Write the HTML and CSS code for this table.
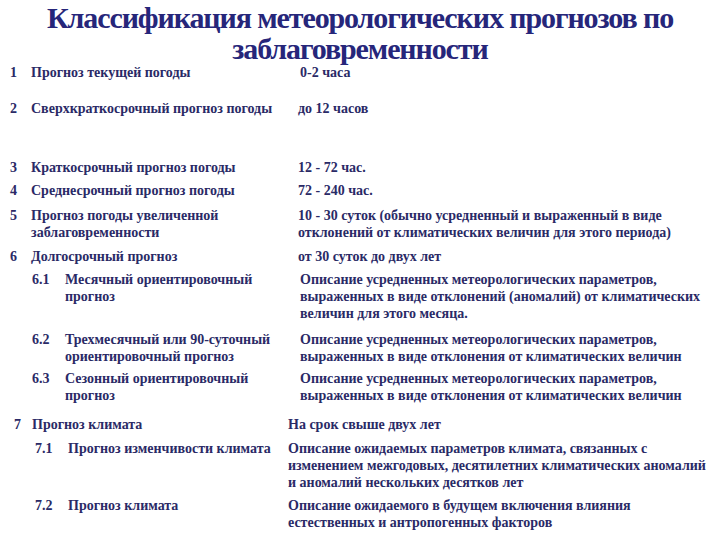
FILE: index.html
```html
<!DOCTYPE html>
<html lang="ru">
<head>
<meta charset="utf-8">
<title>Классификация метеорологических прогнозов</title>
<link rel="stylesheet" href="styles.css">
</head>
<body>
<h1 class="title">Классификация метеорологических прогнозов по<br>заблаговременности</h1>
<div class="table">
  <div class="row r1"><span class="num">1</span><span class="label">Прогноз текущей погоды</span><span class="val v1">0-2 часа</span></div>
  <div class="row r2"><span class="num">2</span><span class="label">Сверхкраткосрочный прогноз погоды</span><span class="val">до 12 часов</span></div>
  <div class="row r3"><span class="num">3</span><span class="label">Краткосрочный прогноз погоды</span><span class="val">12 - 72 час.</span></div>
  <div class="row r4"><span class="num">4</span><span class="label">Среднесрочный прогноз погоды</span><span class="val">72 - 240 час.</span></div>
  <div class="row r5"><span class="num">5</span><span class="label">Прогноз погоды увеличенной<br>заблаговременности</span><span class="val">10 - 30 суток (обычно усредненный и выраженный в виде<br>отклонений от климатических величин для этого периода)</span></div>
  <div class="row r6"><span class="num">6</span><span class="label">Долгосрочный прогноз</span><span class="val">от 30 суток до двух лет</span></div>
  <div class="row sub s61"><span class="num">6.1</span><span class="label">Месячный ориентировочный<br>прогноз</span><span class="val">Описание усредненных метеорологических параметров,<br>выраженных в виде отклонений (аномалий) от климатических<br>величин для этого месяца.</span></div>
  <div class="row sub s62"><span class="num">6.2</span><span class="label">Трехмесячный или 90-суточный<br>ориентировочный прогноз</span><span class="val">Описание усредненных метеорологических параметров,<br>выраженных в виде отклонения от климатических величин</span></div>
  <div class="row sub s63"><span class="num">6.3</span><span class="label">Сезонный ориентировочный<br>прогноз</span><span class="val">Описание усредненных метеорологических параметров,<br>выраженных в виде отклонения от климатических величин</span></div>
  <div class="row clim r7"><span class="num">7</span><span class="label">Прогноз климата</span><span class="val">На срок свыше двух лет</span></div>
  <div class="row clim-sub s71"><span class="num">7.1</span><span class="label">Прогноз изменчивости климата</span><span class="val">Описание ожидаемых параметров климата, связанных с<br>изменением межгодовых, десятилетних климатических аномалий<br>и аномалий нескольких десятков лет</span></div>
  <div class="row clim-sub s72"><span class="num">7.2</span><span class="label">Прогноз климата</span><span class="val">Описание ожидаемого в будущем включения влияния<br>естественных и антропогенных факторов</span></div>
</div>
</body>
</html>
```

FILE: styles.css
```css
html, body {
  margin: 0;
  padding: 0;
  background: #ffffff;
}
body {
  width: 720px;
  height: 540px;
  overflow: hidden;
  font-family: "Liberation Serif", "Times New Roman", serif;
  color: #2a2a66;
}
.title {
  margin: 0;
  padding-top: 2px;
  font-size: 30px;
  line-height: 31px;
  font-weight: bold;
  text-align: center;
  color: #26267a;
  letter-spacing: -1.1px;
}
.table {
  font-family: "Liberation Serif", "Times New Roman", serif;
  font-size: 14px;
  line-height: 17px;
  font-weight: bold;
}
.row {
  display: flex;
  align-items: flex-start;
}
.num { flex: none; }
.label { flex: none; }
.val { flex: 1; white-space: nowrap; }

.row .num { width: 21px; margin-left: 10px; }
.row .label { width: 267px; }

.sub .num { width: 33px; margin-left: 32px; }
.sub .label { width: 235px; }

.clim .num { width: 18px; margin-left: 14px; }
.clim .label { width: 256px; }

.clim-sub .num { width: 33px; margin-left: 35px; }
.clim-sub .label { width: 220px; }

.r1 { margin-top: 0px; }
.v1 { padding-left: 2px; }
.r2 { margin-top: 19px; }
.r3 { margin-top: 42px; }
.r4 { margin-top: 6px; }
.r5 { margin-top: 8px; }
.r6 { margin-top: 7px; }
.s61 { margin-top: 6px; }
.s62 { margin-top: 9px; }
.s63 { margin-top: 5px; }
.r7 { margin-top: 12px; }
.s71 { margin-top: 7px; }
.s72 { margin-top: 6px; }
```
